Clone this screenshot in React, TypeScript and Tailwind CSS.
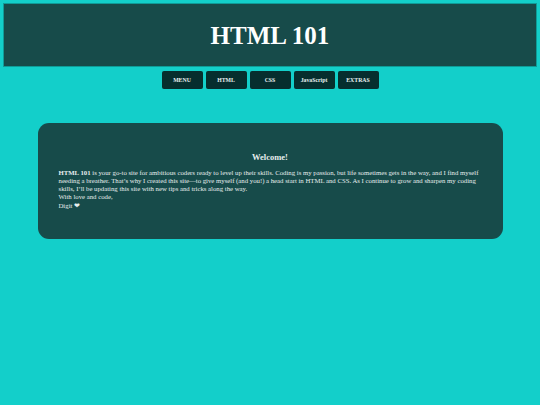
export default function App() {
  const serif = { fontFamily: '"Liberation Serif", "Times New Roman", serif' };
  const links = ['MENU', 'HTML', 'CSS', 'JavaScript', 'EXTRAS'];

  return (
    <div className="min-h-[405px] w-full bg-[#13cfca] p-[3px]" style={serif}>
      <header className="h-[64px] border border-[#0f9c98] bg-[#174b4a] flex items-center justify-center">
        <h1 className="text-[25px] font-bold text-white leading-none">HTML 101</h1>
      </header>

      <nav className="mt-[4px] flex justify-center gap-[3px]">
        {links.map((l) => (
          <button
            key={l}
            className="w-[41px] h-[18px] rounded-[2px] bg-[#062e2e] text-[5.8px] font-bold text-[#e6f0f0] flex items-center justify-center"
          >
            {l}
          </button>
        ))}
      </nav>

      <main className="mt-[34px] mx-auto w-[465px] h-[116px] rounded-[11px] bg-[#174b4a] px-[21px] pt-[29px] text-[#e8eeee]">
        <h2 className="text-center text-[8.5px] font-bold leading-[10px] mb-[7px]">Welcome!</h2>
        <p className="text-[6.75px] leading-[8px]">
          <b>HTML 101</b> is your go-to site for ambitious coders ready to level up their skills. Coding is my passion, but life sometimes gets in the way, and I find myself needing a breather. That’s why I created this site—to give myself (and you!) a head start in HTML and CSS. As I continue to grow and sharpen my coding skills, I’ll be updating this site with new tips and tricks along the way.
          <br />
          With love and code,
        </p>
        <p className="text-[6.75px] leading-[8px] mt-[1px]">Digit ❤</p>
      </main>
    </div>
  );
}
